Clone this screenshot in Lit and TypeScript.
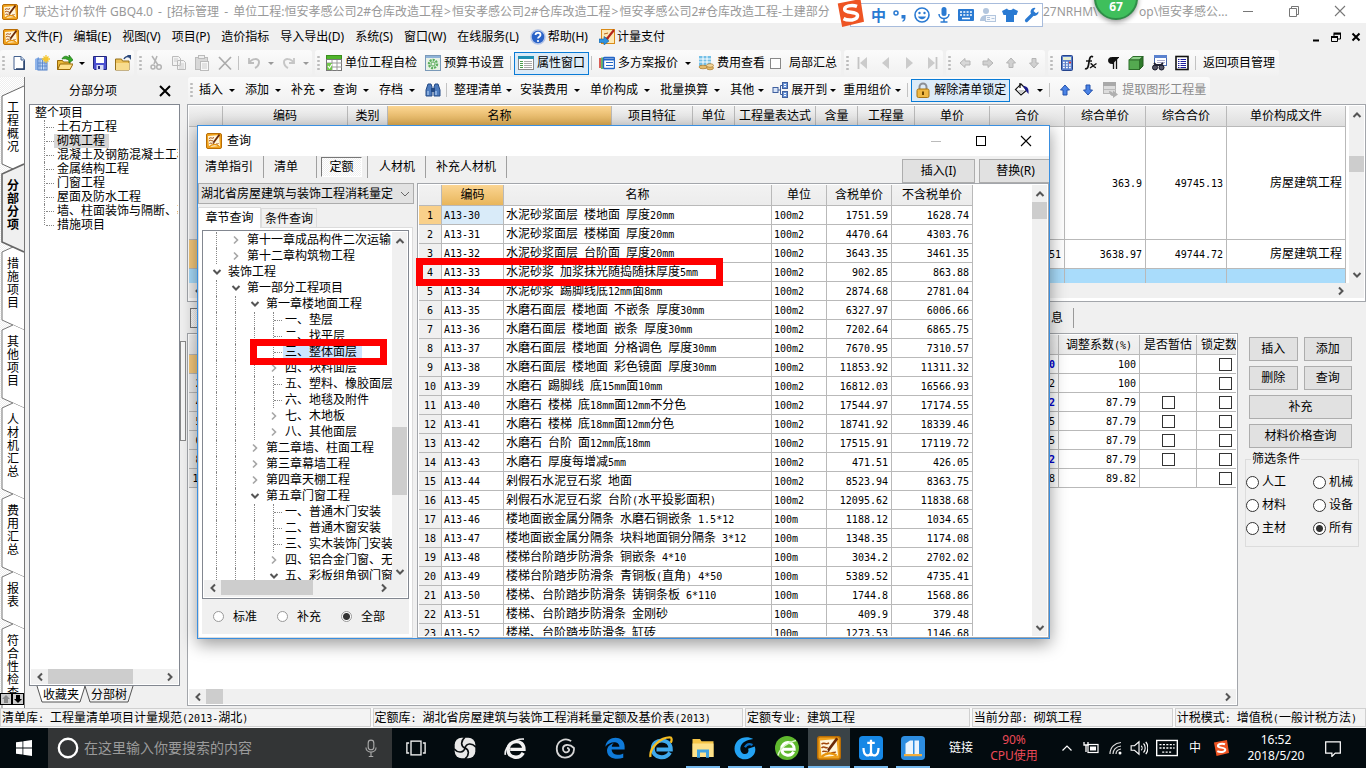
import { LitElement, html, svg, css, nothing } from "lit";
import { customElement } from "lit/decorators.js";
import { classMap } from "lit/directives/class-map.js";
import { styleMap } from "lit/directives/style-map.js";

/* ---------- icons ---------- */

const icons: Record<string, unknown> = {
  app: svg`<rect x=".5" y=".5" width="15" height="15" rx="1.500" fill="#f0a21c" stroke="#b96d05"/><path d="M2 3l11-1 1 11-11 1z" fill="#fff6dc"/><path d="M3 5.500c2-2 3 1 5-1M3 8c2-2 3 1 4-.5M3.500 10.500c1.500-1 2 .5 3-.5M9.500 11.500c1-1 2 0 3-1" stroke="#a2470b" fill="none"/><path d="M7.500 9.500L13.500 1.500" stroke="#6b2a08" stroke-width="1.900"/><path d="M6.500 11.500l1-2.500 1 1z" fill="#6b2a08"/><path d="M3 14c3-3 7-3 10-1" stroke="#e8940c" stroke-width="1.500" fill="none"/>`,
  file: svg`<path d="M3 1.500h7l3.500 3.500v9.500H3z" fill="#fff" stroke="#44618f"/><path d="M10 1.500v3.500h3.500" fill="#cfe0f5" stroke="#44618f"/><path d="M13 6v8H5" stroke="#29426b" stroke-width="1.500" fill="none"/>`,
  project: svg`<path d="M1 4l4-2v13H1z" fill="#8fb4ea"/><rect x="4" y="4" width="9" height="11" fill="#c3daf7" stroke="#4f7fc7"/><path d="M6 5v10M8.500 5v10M11 5v10M4 8h9M4 11h9" stroke="#4f7fc7" stroke-width=".8"/><path d="M12 0v8M8 4h8M9.500 1.500l5 5M14.500 1.500l-5 5" stroke="#f6c62b" stroke-width="1.300"/>`,
  open: svg`<path d="M.5 5.500h5l1 1.500H13v7.500H.5z" fill="#e9b83a" stroke="#9a6a09"/><path d="M3 9h13l-3 5.500H.8z" fill="#ffe08a" stroke="#9a6a09"/><path d="M5 4c1-3 5-4 7-1V0l4 5-4 3V5.500C10 3.500 7 3.500 5 4z" fill="#35a828" stroke="#1b7212" stroke-width=".7"/>`,
  save: svg`<path d="M1.500 1.500h13v13h-12l-1-1z" fill="#4a4fd0" stroke="#22267e"/><rect x="4" y="2" width="8" height="6" fill="#fff"/><rect x="4.500" y="10" width="7" height="5" fill="#d8dcf4"/><rect x="6" y="11" width="2" height="3" fill="#22267e"/>`,
  folder: svg`<path d="M.5 4h6l1 2H14v9H.5z" fill="#edc25b" stroke="#96701a"/><path d="M1 8h13v7H1z" fill="#f8dc8e"/><path d="M9 4c1-2 3-3 5-2" stroke="#2d4a7c" stroke-width="1.500" fill="none"/><path d="M12 0h4v5z" fill="#2d4a7c"/>`,
  cut: svg`<path d="M4 1l6 9M9 1L6 9" stroke="#b3b3b3" stroke-width="1.500" fill="none"/><circle cx="5" cy="12" r="2" fill="none" stroke="#b3b3b3" stroke-width="1.500"/><circle cx="11" cy="12" r="2.300" fill="none" stroke="#b3b3b3" stroke-width="1.500"/>`,
  copy: svg`<path d="M1.500 1.500h6l2 2v7h-8zM6.500 5.500h6l2 2v7h-8z" fill="#f3f3f3" stroke="#bbb"/><path d="M8 9h5M8 11h5M8 13h5M3 4h4M3 6h3" stroke="#ccc"/>`,
  paste: svg`<rect x="1.500" y="2.500" width="12" height="12" fill="#d8d8d8" stroke="#bbb"/><rect x="4.500" y=".5" width="6" height="3" fill="#eee" stroke="#bbb"/><rect x="6.500" y="6.500" width="8" height="9" fill="#f8f8f8" stroke="#bbb"/><path d="M8 9h5M8 11h5M8 13h5" stroke="#ccc"/>`,
  del: svg`<path d="M2 2l12 12.500M14 2L2 14.500" stroke="#ababab" stroke-width="1.700"/>`,
  undo: svg`<path d="M3 3v5h5" fill="none" stroke="#bdbdbd" stroke-width="1.800"/><path d="M3 8c3-5 10-5 10-1 0 3-2 5-4 6" fill="none" stroke="#bdbdbd" stroke-width="2"/>`,
  redo: svg`<path d="M13 3v5H8" fill="none" stroke="#c6c6c6" stroke-width="1.800"/><path d="M13 8C10 3 3 3 3 7c0 3 2 5 4 6" fill="none" stroke="#c6c6c6" stroke-width="2"/>`,
  check: svg`<rect x=".5" y=".5" width="15" height="4" fill="#4fb52b" stroke="#3b8e1e"/><rect x=".5" y="4.500" width="15" height="11" fill="#fff" stroke="#777"/><path d="M1 8h15M1 12h15M6 5v11M11 5v11" stroke="#999"/><rect x="1" y="8" width="5" height="7" fill="#72c84c"/><path d="M2 11l1.500 2L6 9" stroke="#fff" stroke-width="1.200" fill="none"/>`,
  gear: svg`<rect x=".5" y=".5" width="15" height="15" fill="#e8f1e6" stroke="#7a99b8"/><rect x="1" y="1" width="14" height="2" fill="#8fb3d9"/><circle cx="8" cy="9" r="4" fill="none" stroke="#5cae5c" stroke-width="2.400" stroke-dasharray="2 1"/><circle cx="8" cy="9" r="2" fill="none" stroke="#5cae5c"/>`,
  props: svg`<rect x=".5" y="1.500" width="15" height="13" fill="#fff" stroke="#888"/><rect x="0" y="1" width="16" height="3" fill="#1f8fb4"/><path d="M2 6.500h3M2 8.500h3M2 10.500h3M2 12.500h3" stroke="#4a9e4a"/><path d="M6 6.500h8M6 8.500h8M6 10.500h8M6 12.500h8" stroke="#aaa"/>`,
  plans: svg`<path d="M1 3v10" stroke="#d02b20" stroke-width="1.500"/><path d="M3 2.500v11.500" stroke="#3aa13a" stroke-width="1.500"/><rect x="4.500" y="2.500" width="11" height="11" rx="1" fill="#fff" stroke="#2466c6" stroke-width="1.400"/><path d="M5 4.500h10" stroke="#2466c6" stroke-width="2"/><path d="M7 7.500h7M7 10.500h7" stroke="#2466c6"/>`,
  cost: svg`<rect x="1" y="1" width="12" height="10" fill="#73bfe6"/><path d="M1 4h12M1 7h12M5 1v10M9 1v10" stroke="#fff"/><ellipse cx="5" cy="12" rx="4" ry="1.800" fill="#e5ba6a" stroke="#a9772b" stroke-width=".7"/><ellipse cx="12" cy="13" rx="3.500" ry="1.800" fill="#e5ba6a" stroke="#a9772b" stroke-width=".7"/><ellipse cx="12" cy="10.500" rx="3.500" ry="1.800" fill="#f3d79b" stroke="#a9772b" stroke-width=".7"/>`,
  first: svg`<path d="M3.500 2v12" stroke="#c4c4c4" stroke-width="1.800"/><path d="M12 2v12L5 8z" fill="#cbcbcb"/>`,
  prev: svg`<path d="M11 2v12L4 8z" fill="#cbcbcb"/>`,
  next: svg`<path d="M5 2v12l7-6z" fill="#cbcbcb"/>`,
  last: svg`<path d="M12.500 2v12" stroke="#c4c4c4" stroke-width="1.800"/><path d="M4 2v12l7-6z" fill="#cbcbcb"/>`,
  gl: svg`<path d="M3 8l5-4.500V6h5v4H8v2.500z" fill="#d8d8d8" stroke="#b5b5b5"/>`,
  gr: svg`<path d="M13 8L8 3.500V6H3v4h5v2.500z" fill="#d0d0d0" stroke="#b5b5b5"/>`,
  gu: svg`<path d="M8 3l4.500 5H10v4.500H6V8H3.500z" fill="#d0d0d0" stroke="#b5b5b5"/>`,
  gd: svg`<path d="M8 13l4.500-5H10V3.500H6V8H3.500z" fill="#d0d0d0" stroke="#b5b5b5"/>`,
  calc: svg`<rect x="2.500" y=".5" width="11" height="15" rx="1" fill="#5b7fcb" stroke="#24438c"/><rect x="4" y="2" width="8" height="3" fill="#e4ecd0"/><path d="M4 7.500h8M4 10h8M4 12.500h8" stroke="#fff" stroke-width="1.500" stroke-dasharray="1.800 1.200"/><path d="M10 7.500h2" stroke="#d33" stroke-width="1.500"/>`,
  fx: svg`<path d="M11 2C8 0 7.500 4 7 7s-1 8-4 6.500" fill="none" stroke="#111" stroke-width="1.700"/><path d="M4 6h6" stroke="#111" stroke-width="1.400"/><path d="M8.500 8.500c2 0 3 4.500 5.500 4M14.500 8.500L8 13" stroke="#111" stroke-width="1.400" fill="none"/>`,
  para: svg`<path d="M14 2.500H6.500a3 3 0 000 6H8" fill="#111" stroke="#111"/><path d="M8.500 2v12M11.500 2v12" stroke="#111" stroke-width="1.300"/>`,
  cube: svg`<path d="M1 5l4-3.500h10L11.500 5z" fill="#8fd08a" stroke="#2d6e2a"/><path d="M11.500 5L15 1.500v9.500l-3.500 3.500z" fill="#2f7a2b" stroke="#245c21"/><rect x="1" y="5" width="10.500" height="9.500" fill="#54a950" stroke="#2d6e2a"/>`,
  findwin: svg`<rect x="3.500" y=".5" width="12" height="10" fill="#fff" stroke="#4a6aae"/><rect x="3" y="0" width="13" height="3" fill="#5a82cf"/><path d="M6 5.500h8M6 7.500h8" stroke="#aac"/><circle cx="4" cy="12.500" r="2.500" fill="#556" stroke="#112"/><circle cx="10.500" cy="12.500" r="2.500" fill="#556" stroke="#112"/><path d="M3 8l2 2h5l2-2" stroke="#223" stroke-width="1.800" fill="none"/>`,
  list: svg`<rect x="2" y="1.500" width="12" height="13" fill="#fff" stroke="#111" stroke-width="1.600"/><path d="M6.500 4.500H12M6.500 6.500H12M6.500 8.500H12M6.500 10.500H12M6.500 12.500H12" stroke="#1b1b9a"/><path d="M4 4.500h1.500M4 6.500h1.500M4 8.500h1.500M4 10.500h1.500M4 12.500h1.500" stroke="#1b1b9a"/>`,
  binoc: svg`<path d="M3 2h3l1 3v9H1V8zM10 2h3l2 6v6H9V5z" fill="#4d7bbd" stroke="#244a85"/><path d="M6 6h4v4H6z" fill="#244a85"/><path d="M3 9v4M11 9v4" stroke="#a9c8f0" stroke-width="1.300"/>`,
  expand: svg`<rect x="1" y="5.500" width="5" height="5" fill="#d6e3f7" stroke="#3f5f9e"/><rect x="10.500" y=".5" width="5" height="6" fill="#6b94d6" stroke="#3f5f9e"/><rect x="10.500" y="9.500" width="5" height="6" fill="#6b94d6" stroke="#3f5f9e"/><path d="M6 8h2.500M10 3.500H8.500v9H10" stroke="#3f5f9e" fill="none"/><path d="M12 2.500h2M12 4.500h2M12 11.500h2M12 13.500h2" stroke="#fff"/>`,
  lock: svg`<path d="M4.500 8V5a3.500 3.500 0 017 0v3" fill="none" stroke="#8b8f96" stroke-width="2"/><rect x="2" y="7" width="12" height="8.500" rx="1.500" fill="#f0b944" stroke="#a87410"/><rect x="7" y="9.500" width="2" height="3.500" fill="#6b4600"/>`,
  bucket: svg`<path d="M7 2l6 6-6 5-5.500-5.500z" fill="#fff" stroke="#111" stroke-width="1.200"/><path d="M6 1v5" stroke="#111" stroke-width="1.300"/><path d="M9 4c4 0 6 2 5.500 8L12 9z" fill="#1b1b8a"/><path d="M4 8h7l-4 4z" fill="#ccc"/>`,
  up: svg`<path d="M8 3l4.500 5H10v5H6V8H3.500z" fill="#4a83e6" stroke="#2452ad"/>`,
  down: svg`<path d="M8 13l4.500-5H10V3H6v5H3.500z" fill="#4a83e6" stroke="#2452ad"/>`,
  extract: svg`<rect x=".5" y=".5" width="12" height="11" fill="#ddd" stroke="#b5b5b5"/><rect x="0" y="0" width="13" height="4" fill="#a9a9a9"/><path d="M1 7.500h12" stroke="#bbb"/><path d="M6 9c2 0 3 1 4 2V8.500l5 4-5 3.500v-2c-2 0-4-2-4-5z" fill="#b0b0b0"/>`,
  help: svg`<circle cx="8" cy="8" r="7" fill="#2a63c8" stroke="#b4c4e6" stroke-width="1.500"/><path d="M5.500 6c.3-3 5-3 5 0 0 1.700-2.500 1.700-2.500 3.500" stroke="#fff" stroke-width="1.800" fill="none"/><circle cx="8" cy="12" r="1.100" fill="#fff"/>`,
  pay: svg`<rect x="2.500" y=".5" width="13" height="14" fill="#fde9b5" stroke="#d98a17"/><path d="M5 5l4-1M5 8l5 2" stroke="#b8641a"/><path d="M7 11L15 1" stroke="#b3261b" stroke-width="2.200"/><path d="M0 10h5V7.500L10 12l-5 4v-2.500H0z" fill="#2e93e0" stroke="#14609f" stroke-width=".6"/>`,
  punct: svg`<circle cx="4" cy="6" r="2" fill="none" stroke="#2a7ad2" stroke-width="1.500"/><path d="M9.500 8h4v3c0 2-1 3-3 4v-1.500c1-.5 1.300-1 1.300-2H9.500z" fill="#2a7ad2"/>`,
  smile: svg`<circle cx="8" cy="8" r="7" fill="none" stroke="#2a7ad2" stroke-width="1.600"/><circle cx="5.500" cy="6" r="1.200" fill="#2a7ad2"/><circle cx="10.500" cy="6" r="1.200" fill="#2a7ad2"/><path d="M4 9.500c1.500 3.500 6.500 3.500 8 0z" fill="#2a7ad2"/>`,
  mic: svg`<rect x="5.500" y="0" width="5" height="9" rx="2.500" fill="#2a7ad2"/><path d="M3 7c0 6 10 6 10 0M8 12v3M4.500 15h7" fill="none" stroke="#2a7ad2" stroke-width="1.500"/>`,
  kbd: svg`<rect x="0" y="2" width="16" height="12" rx="1" fill="#2a7ad2"/><path d="M2 5h12M2 8h12" stroke="#fff" stroke-width="1.600" stroke-dasharray="2 1.300"/><path d="M4 11.500h8" stroke="#fff" stroke-width="1.600"/>`,
  person: svg`<circle cx="6" cy="4" r="3" fill="#b3c6de"/><path d="M0 14c0-8 12-8 12 0z" fill="#b3c6de"/><rect x="5.500" y="8.500" width="10" height="6" fill="#f5f8fc" stroke="#b3c6de"/><path d="M7 10.500h3M7 12.500h3M11.500 11.500h3" stroke="#b3c6de"/>`,
  shirt: svg`<path d="M5 1.500c1 2 5 2 6 0l5 2.500-1.500 4H12v7H4V8H1.500L0 4z" fill="#2a7ad2"/>`,
  wrench: svg`<path d="M2.500 13.500L9 7" stroke="#2a7ad2" stroke-width="3.200" stroke-linecap="round"/><path d="M14.500 4.500a4 4 0 11-3-3.500L9.500 4l2.500 2.200z" fill="#2a7ad2"/>`,
  sogou: svg`<path d="M1 2.500L14 0l2 13-12.500 3z" fill="#ee5423"/><path d="M12 4.200C9 3 4.500 4 5 6.200c.4 2 7.500.8 7.300 3.500-.2 2.500-5.300 3-8 1.500" fill="none" stroke="#fff" stroke-width="2"/>`,
  min: svg`<path d="M3 8.500h10" stroke="#777"/>`,
  restore: svg`<path d="M3.500 5.500h7v8h-7zM5.500 5.500v-2h7v8h-2" fill="none" stroke="#777"/>`,
  close: svg`<path d="M3 3l10 10M13 3L3 13" stroke="#777" stroke-width="1.100"/>`,
  mmin: svg`<path d="M5 11.500h6" stroke="#000" stroke-width="2"/>`,
  mrestore: svg`<path d="M3.500 8.500h6v4h-6zM6 8V5h6.500v5H10" fill="none" stroke="#000"/><path d="M3 8h7M5.500 4.500h7.500" stroke="#000" stroke-width="1.800"/>`,
  mclose: svg`<path d="M4.500 4.500l7 7M11.500 4.500l-7 7" stroke="#000" stroke-width="2"/>`,
  px: svg`<path d="M3 3l10 10M13 3L3 13" stroke="#000" stroke-width="2"/>`,
  dmin: svg`<path d="M3 8.500h10" stroke="#bbb"/>`,
  dmax: svg`<rect x="3.500" y="3.500" width="9" height="9" fill="none" stroke="#000"/>`,
  dclose: svg`<path d="M3 3l10 10M13 3L3 13" stroke="#000" stroke-width="1.100"/>`,
  win: svg`<path d="M0 2.300L6.500 1.400V7.600H0zM7.300 1.300L16 0v7.600H7.300zM0 8.400h6.500v6.200L0 13.700zM7.300 8.400H16V16l-8.700-1.300z" fill="#fff"/>`,
  ring: svg`<circle cx="8" cy="8" r="6.700" fill="none" stroke="#fff" stroke-width="1.700"/>`,
  tmic: svg`<rect x="5.500" y="1" width="5" height="8.500" rx="2.500" fill="none" stroke="#aaa"/><path d="M3.500 7.500c0 5.500 9 5.500 9 0M8 12v3M6 15.500h4" fill="none" stroke="#aaa"/>`,
  task: svg`<rect x="4" y="2.500" width="8" height="11" fill="none" stroke="#eee" stroke-width="1.100"/><path d="M2.500 4H.7v8h1.800M13.500 4h1.800v8h-1.800" fill="none" stroke="#eee" stroke-width="1.100"/>`,
  fan: svg`<rect x=".5" y=".5" width="15" height="15" rx="5" fill="#e9e9e9"/><path d="M8 8C5 7 4.500 3 8 0M8 8c1-3.500 5-4 8-.5M8 8c3 1 3.500 5 0 8M8 8c-1 3.500-5 4-8 .5" stroke="#0a0f12" fill="none" stroke-width="1.200"/>`,
  ewhite: svg`<path d="M14 11.500c-3 5-11 4-11-2.500 0-7 11.500-8 11.500 0H4.500" fill="none" stroke="#f2f2f2" stroke-width="2.500"/><path d="M1 13C0 8 7 1 14.500 1.500" fill="none" stroke="#f2f2f2" stroke-width="1.200"/>`,
  gwhite: svg`<path d="M12.500 3C8 0 2 3 2 8.500 2 13 5 15 8 15c4 0 7-3 6.500-7C11 4.500 6.500 5.500 6.500 8.500 6.500 11 9 12 10.500 10.500 11.500 9.500 11 8 9.500 8" fill="none" stroke="#d6d6d6" stroke-width="1.300"/>`,
  edge: svg`<path d="M1 7C2-1.500 15-1.500 15 7v2H5.500c.5 4.500 6 4.500 8.500 3v3C9 17 2 15.500 2.200 9.500 2.500 6.500 5 5 7 4.500c-1 1-1.300 1.500-1.300 2.500h5.500C11 2.500 4 3 1 7z" fill="#0f7ad8"/>`,
  ie: svg`<path d="M14 11c-3 5-11.500 4-11.500-2.500 0-7 12-8 12 .5H5" fill="none" stroke="#3fa9ec" stroke-width="2.700"/><path d="M1 14C0 8 8 .5 14.500 1c1 1 .5 2.500 0 3.500" fill="none" stroke="#f5bd22" stroke-width="1.500"/>`,
  explorer: svg`<path d="M1 2h5l1 1.500h8V14H1z" fill="#f6c648"/><path d="M1 5h14v9H1z" fill="#fde28a"/><path d="M4 9h8v5.500h-2V11H6v3.500H4z" fill="#3fa3e0"/>`,
  gblue: svg`<path d="M13.500 2C8-1 1 2 1 8.500 1 13 5 16 8.500 15.500 13 15 16 11 14.500 7L10 8.500c1 2-.5 3.500-2 3.500-2 0-3.500-2-3-4.500C5.500 4.500 9 2.500 13.500 2z" fill="#23a2f2"/><path d="M8 7.500c1-2 3-2.500 5-1.500" stroke="#0b6fc4" stroke-width="1.500" fill="none"/>`,
  egreen: svg`<circle cx="8" cy="8" r="8" fill="#5fb82e"/><path d="M12.500 10.500c-2 3.500-8 3-8-2 0-5.500 8.300-5.500 8.300.3H5" fill="none" stroke="#fff" stroke-width="2"/><path d="M2 13c1-5 7-9 12-10" stroke="#d9f2c5" fill="none"/>`,
  bluebox: svg`<rect width="16" height="16" rx="2.500" fill="#1688e6"/><path d="M8 2.500v11M5.500 4.500h5M3 8c0 6 4 6 5 3 1 3 5 3 5-3" fill="none" stroke="#fff" stroke-width="1.500"/>`,
  docbox: svg`<rect width="16" height="16" rx="2.500" fill="#2d8de0"/><path d="M3 12V5l3-2h2v9zM9 12V3h3v9z" fill="#eaf4fd"/><path d="M2 12h12v1.500H2z" fill="#f3ae3d"/>`,
  tup: svg`<path d="M3.500 10.500L8 6l4.500 4.500" fill="none" stroke="#fff" stroke-width="1.200"/>`,
  batt: svg`<rect x="5" y="4.500" width="10" height="8" fill="none" stroke="#fff" stroke-width="1.200"/><path d="M1 2v3h4V2M3 5v7" stroke="#fff" fill="none" stroke-width="1.300"/><rect x="7" y="6.500" width="6" height="4" fill="#fff"/>`,
  wifi: svg`<path d="M3 14C3 7 8 3 14 2.500M6 14c0-4 3-7.500 8-8M9 14c0-2.500 2-4.500 5-5" fill="none" stroke="#ddd" stroke-width="1.200"/><circle cx="13" cy="13" r="1.500" fill="#fff"/>`,
  spk: svg`<path d="M1 6h3l4-3.500v11L4 10H1z" fill="none" stroke="#fff"/><path d="M10 6c1 1 1 3 0 4M12 4c2 2 2 6 0 8M14 2.500c2.500 3 2.500 8 0 11" fill="none" stroke="#fff"/>`,
  tkbd: svg`<rect x=".5" y="2.500" width="15" height="11" fill="none" stroke="#fff"/><path d="M2.500 5.500h11M2.500 8h11M4.500 11h7" stroke="#fff" stroke-dasharray="1.500 1"/>`,
  note: svg`<path d="M1.500 2.500h13v10H10L7 15.500v-3H1.500z" fill="none" stroke="#fff" stroke-width="1.100"/>`,
  cu: svg`<path d="M4.500 10L8 6.500 11.500 10" fill="none" stroke="#555" stroke-width="2"/>`,
  cd: svg`<path d="M4.500 6L8 9.500 11.500 6" fill="none" stroke="#555" stroke-width="2"/>`,
  cl: svg`<path d="M10 4.500L6.500 8l3.500 3.500" fill="none" stroke="#555" stroke-width="2"/>`,
  cr: svg`<path d="M6 4.500L9.500 8 6 11.500" fill="none" stroke="#555" stroke-width="2"/>`,
  crg: svg`<path d="M6 4.500L9.500 8 6 11.500" fill="none" stroke="#a6a6a6" stroke-width="1.600"/>`,
};

const icon = (name: string, size = "s16") =>
  html`<svg class=${"ic " + size} viewBox="0 0 16 16" aria-hidden="true">${icons[name]}</svg>`;

/* Latin runs sit on the half-width cell of the CJK grid. */
const tx = (s: string) =>
  s.split(/([\x20-\x7e]+)/).filter(Boolean).map((p) =>
    /^[\x20-\x7e]/.test(p) ? html`<span class="m">${p}</span>` : p);

const track = (before: number, thumb: number, after: number) => html`
  <div class="track"><i style=${styleMap({ flexGrow: String(before) })}></i><b style=${styleMap({ flexGrow: String(thumb) })}></b><i style=${styleMap({ flexGrow: String(after) })}></i></div>`;
const hbar = (before: number, thumb: number, after: number) => html`
  <div class="hbar"><span class="arr">${icon("cl")}</span>${track(before, thumb, after)}<span class="arr">${icon("cr")}</span></div>`;
const vbar = (before: number, thumb: number, after: number) => html`
  <div class="vbar"><span class="arr">${icon("cu")}</span>${track(before, thumb, after)}<span class="arr">${icon("cd")}</span></div>`;

/* ---------- data ---------- */

const sideTabs = ["工程概况", "分部分项", "措施项目", "其他项目", "人材机汇总", "费用汇总", "报表", "符合性检查"];
const sections = ["土石方工程", "砌筑工程", "混凝土及钢筋混凝土工程", "金属结构工程", "门窗工程", "屋面及防水工程", "墙、柱面装饰与隔断、幕墙工程", "措施项目"];

type Node = [level: number, kind: "open" | "shut" | "leaf", label: string];
const chapters: Node[] = [
  [1, "shut", "第十一章成品构件二次运输"], [1, "shut", "第十二章构筑物工程"], [0, "open", "装饰工程"],
  [1, "open", "第一部分工程项目"], [2, "open", "第一章楼地面工程"], [3, "leaf", "一、垫层"],
  [3, "leaf", "二、找平层"], [3, "leaf", "三、整体面层"], [3, "shut", "四、块料面层"],
  [3, "leaf", "五、塑料、橡胶面层"], [3, "leaf", "六、地毯及附件"], [3, "shut", "七、木地板"],
  [3, "shut", "八、其他面层"], [2, "shut", "第二章墙、柱面工程"], [2, "shut", "第三章幕墙工程"],
  [2, "shut", "第四章天棚工程"], [2, "open", "第五章门窗工程"], [3, "leaf", "一、普通木门安装"],
  [3, "leaf", "二、普通木窗安装"], [3, "leaf", "三、实木装饰门安装"], [3, "shut", "四、铝合金门窗、无框门"],
  [3, "open", "五、彩板组角钢门窗"],
];

const quotas: [string, string, string, string][] = [
  ["水泥砂浆面层 楼地面 厚度20mm", "100m2", "1751.59", "1628.74"],
  ["水泥砂浆面层 楼梯面 厚度20mm", "100m2", "4470.64", "4303.76"],
  ["水泥砂浆面层 台阶面 厚度20mm", "100m2", "3643.35", "3461.35"],
  ["水泥砂浆 加浆抹光随捣随抹厚度5mm", "100m2", "902.85", "863.88"],
  ["水泥砂浆 踢脚线底12mm面8mm", "100m2", "2874.68", "2781.04"],
  ["水磨石面层 楼地面 不嵌条 厚度30mm", "100m2", "6327.97", "6006.66"],
  ["水磨石面层 楼地面 嵌条 厚度30mm", "100m2", "7202.64", "6865.75"],
  ["水磨石面层 楼地面 分格调色 厚度30mm", "100m2", "7670.95", "7310.57"],
  ["水磨石面层 楼地面 彩色镜面 厚度30mm", "100m2", "11853.92", "11311.32"],
  ["水磨石 踢脚线 底15mm面10mm", "100m2", "16812.03", "16566.93"],
  ["水磨石 楼梯 底18mm面12mm不分色", "100m2", "17544.97", "17174.55"],
  ["水磨石 楼梯 底18mm面12mm分色", "100m2", "18741.92", "18339.46"],
  ["水磨石 台阶 面12mm底18mm", "100m2", "17515.91", "17119.72"],
  ["水磨石 厚度每增减5mm", "100m2", "471.51", "426.05"],
  ["剁假石水泥豆石浆 地面", "100m2", "8523.94", "8363.75"],
  ["剁假石水泥豆石浆 台阶(水平投影面积)", "100m2", "12095.62", "11838.68"],
  ["楼地面嵌金属分隔条 水磨石铜嵌条 1.5*12", "100m", "1188.12", "1034.65"],
  ["楼地面嵌金属分隔条 块料地面铜分隔条 3*12", "100m", "1348.35", "1174.08"],
  ["楼梯台阶踏步防滑条 铜嵌条 4*10", "100m", "3034.2", "2702.02"],
  ["楼梯台阶踏步防滑条 青铜板(直角) 4*50", "100m", "5389.52", "4735.41"],
  ["楼梯、台阶踏步防滑条 铸铜条板 6*110", "100m", "1744.8", "1568.86"],
  ["楼梯、台阶踏步防滑条 金刚砂", "100m", "409.9", "379.48"],
  ["楼梯、台阶踏步防滑条 缸砖", "100m", "1273.53", "1146.68"],
];

const billCols = ["", "编码", "类别", "名称", "项目特征", "单位", "工程量表达式", "含量", "工程量", "单价", "合价", "综合单价", "综合合价", "单价构成文件"];
const billRows = [
  ["", "", "", "", "", "", "", "", "", "", "", "363.9", "49745.13", "房屋建筑工程"],
  ["", "", "", "", "", "", "", "", "", "", "51", "3638.97", "49744.72", "房屋建筑工程"],
  ["", "", "", "", "", "", "", "", "", "", "", "", "", ""],
];

/* number, last digit of the price, emphasised, factor, can be provisional */
const materials: [string, string, boolean, string, boolean][] = [
  ["", "0", true, "100", false], ["2", "2", false, "100", false], ["4", "2", true, "87.79", true],
  ["5", "5", false, "87.79", true], ["6", "5", false, "87.79", true], ["8", "2", true, "87.79", true],
  ["10", "8", false, "89.82", false],
];

@customElement("app-root")
export class AppRoot extends LitElement {
  static styles = css`
    :host { display: flex; flex-direction: column; position: relative; height: 100vh; overflow: hidden; background: #f0f0f0; color: #000;
      font: 12px/16px "Noto Sans", "Noto Sans CJK SC", sans-serif; }
    * { box-sizing: border-box; }
    button, select, input { font: inherit; color: inherit; margin: 0; padding: 0; border: 0; background: none; border-radius: 0; white-space: nowrap; }
    a { color: inherit; text-decoration: none; }
    .m { font: 10px/12px "DejaVu Sans Mono", monospace; white-space: pre; }
    .ic { display: block; flex: none; }
    .s14 { width: 14px; height: 14px; } .s16 { width: 16px; height: 16px; } .s18 { width: 18px; height: 18px; }
    .s20 { width: 20px; height: 20px; } .s22 { width: 22px; height: 22px; } .s24 { width: 24px; height: 24px; } .s28 { width: 28px; height: 28px; }

    .title { display: flex; align-items: center; height: 23px; background: #fff; color: #999; padding-left: 2px; white-space: nowrap; flex: none; position: relative; }
    .title .name { flex: 1; margin-left: 5px; overflow: hidden; }
    .title .name i { font-style: normal; margin: 0 2px; }
    .title .name b { font-weight: 400; margin: 0 1px; }
    .title .path { width: 185px; display: flex; }
    .title .path span { width: 96px; }
    .wins { display: flex; gap: 30px; padding: 0 18px 2px 12px; }
    .wins button, .dwins button { display: block; }
    .ime { position: absolute; right: 323px; top: 3px; width: 193px; height: 24px; display: flex; align-items: center; gap: 6px; padding-left: 20px;
      border: 1px solid #a8bcdc; background: #fff; color: #2a7ad2; font-weight: 700; font-size: 15px; z-index: 3; }
    .ime .logo { position: absolute; left: -15px; top: -5px; }
    .ball { position: absolute; right: 228px; top: -24px; width: 44px; height: 44px; border-radius: 50%; background: #3fbf5c; border: 2px solid #2f8d48;
      color: #fff; font-weight: 700; text-align: center; line-height: 14px; padding-top: 22px; z-index: 3; box-shadow: 0 2px 5px #0006; }

    .menu { display: flex; align-items: center; height: 27px; padding-left: 3px; gap: 11px; flex: none; }
    .menu > .ic { margin-right: -5px; }
    .menu a { display: flex; gap: 2px; align-items: center; white-space: nowrap; }
    .menu .mwins { margin-left: auto; display: flex; gap: 4px; padding-right: 2px; }

    .bar { display: flex; gap: 3px; height: 27px; flex: none; }
    .grp { display: flex; align-items: center; background: linear-gradient(#fbfbfb, #f1f1f1); border-radius: 3px; height: 26px; white-space: nowrap; }
    .grip { width: 7px; height: 16px; background: radial-gradient(circle, #bbb 1px, transparent 1.500px) 0 0 / 7px 4px; flex: none; }
    .slot { width: 23px; display: flex; justify-content: center; align-items: center; flex: none; }
    .tb { display: flex; align-items: center; height: 23px; padding: 0 4px; }
    .tb.i { padding-left: 0; }
    .tb.n { padding-right: 0; }
    .tb.on { border: 1px solid #0a7bd6; background: #dcebf8; padding-right: 3px; }
    .tb.on .slot { margin-left: -1px; }
    .tb.dis { color: #8b8b8b; }
    .sep { width: 1px; height: 14px; background: #c2c2c2; margin: 0 3px 0 2px; flex: none; }
    .ar { width: 12px; display: flex; justify-content: center; flex: none; }
    .ar::after { content: ""; border: 3px solid transparent; border-top-color: #000; border-bottom: 0; }
    .ar.g::after { border-top-color: #999; }
    .ar.n14 { width: 14px; } .ar.w18 { width: 18px; }
    .ckl { display: flex; align-items: center; gap: 8px; padding: 0 4px 0 1px; }

    input[type="checkbox"] { appearance: none; width: 13px; height: 13px; border: 1px solid #333; background: #fff; display: block; }
    .ckl input[type="checkbox"] { width: 11px; height: 11px; border-color: #888; }
    input[type="radio"] { appearance: none; width: 13px; height: 13px; border: 1px solid #333; border-radius: 50%; background: #fff; flex: none; }
    input[type="radio"]:checked { background: radial-gradient(circle, #333 3px, #fff 4px); }

    .main { display: flex; flex: 1; min-height: 0; font-family: "Liberation Sans", "Noto Sans CJK SC", sans-serif; }
    .hatch { background: repeating-conic-gradient(#fff 0 25%, #eee 0 50%) 0 0 / 2px 2px; }
    .side { width: 25px; flex: none; border-right: 1px solid #777; padding-top: 13px; overflow: hidden; position: relative; display: flex; flex-direction: column; }
    .stab { position: relative; display: block; flex: none; width: 24px; padding: 12px 5px 14px 7px; line-height: 13px; white-space: normal; text-align: center; word-break: break-all; }
    .stab span { position: relative; display: block; }
    .stab svg { position: absolute; left: 0; top: 0; width: 100%; height: 100%; overflow: visible; }
    .stab.sel { font-weight: 700; z-index: 1; }
    .spin { position: absolute; left: 0; bottom: 3px; display: flex; z-index: 2; }
    .spin button { width: 12px; height: 12px; background: #ccc; border: 1px solid #000; display: flex; align-items: center; justify-content: center; }
    .spin svg { width: 8px; height: 8px; }

    .panel { width: 151px; margin-left: 4px; flex: none; display: flex; flex-direction: column; padding-bottom: 2px; }
    .phead { height: 27px; display: flex; align-items: center; justify-content: flex-end; gap: 40px; padding-right: 7px; }
    .box { border: 1px solid #828790; background: #fff; }
    .ptree { flex: 1; min-height: 0; display: flex; flex-direction: column; padding: 1px; }
    .ptree ul { list-style: none; margin: 0; padding: 0 0 0 4px; flex: 1; overflow: hidden; line-height: 14px; white-space: nowrap; }
    .ptree .kids { padding-left: 9px; }
    .ptree .kids li { display: flex; align-items: center; }
    .ptree .kids li::before { content: ""; width: 9px; height: 14px; border-left: 1px dotted #888; flex: none; }
    .ptree .kids li:last-child::before { height: 7px; margin-bottom: 7px; }
    .ptree .kids li i { width: 8px; border-top: 1px dotted #888; margin-left: -8px; flex: none; }
    .ptree .kids span { padding: 0 4px 0 3px; line-height: 14px; flex: none; }
    .ptree .kids .cur { background: #d6d6d6; }
    .btabs { height: 20px; padding-left: 8px; display: flex; }
    .btabs button { position: relative; height: 17px; width: 48px; display: flex; justify-content: center; align-items: center; }
    .btabs svg { position: absolute; inset: 0; width: 100%; height: 100%; overflow: visible; }
    .btabs span { position: relative; }
    .split { width: 7px; flex: none; display: flex; align-items: flex-start; padding-top: 264px; }
    .split i { width: 6px; height: 100px; border: 1px solid #888; background: #f7f7f7; }

    .work { flex: 1; min-width: 0; display: flex; flex-direction: column; padding-bottom: 2px; }
    .work .bar { padding-left: 1px; font-family: "Noto Sans", "Noto Sans CJK SC", sans-serif; }
    .grid { border: 1px solid #a3a6ab; background: #fff; padding: 1px; display: flex; }
    .view { flex: 1; min-width: 0; overflow: hidden; }
    table { border-collapse: separate; border-spacing: 0; table-layout: fixed; width: 100%; }
    th, td { border: 0 solid #b9b9b9; border-width: 0 1px 1px 0; padding: 0 2px; overflow: hidden; white-space: nowrap; font-weight: 400; }
    th { background: linear-gradient(#f2f2f2, #ececec); height: 20px; padding: 0; line-height: 18px; text-align: center; }
    th.hot { background: linear-gradient(#fbd592, #e8b65c); }
    .r { text-align: right; padding-right: 3px; }
    .bills { height: 198px; flex: none; flex-direction: column; }
    .bills .pane { flex: 1; min-height: 0; display: flex; }
    .bills .view { padding-right: 3px; }
    .bills .foot { padding-right: 15px; background: #f0f0f0; margin-bottom: 2px; }
    .bills th { height: 21px; background: linear-gradient(#f2f2f2, #dedede); }
    .bills th.hot { background: linear-gradient(#fbd592, #dba94f); }
    .bills tr:nth-child(1) td { height: 113px; }
    .bills tr:nth-child(2) td { height: 29px; }
    .bills tr:nth-child(3) td { height: 19px; background: #a9dcfb; }
    .bills td:first-child { background: #ececec; }
    .bills tr:nth-child(2) td:first-child { background: #f5c97d; }
    .w20 { width: 20px; } .w23 { width: 23px; } .w34 { width: 34px; } .w40 { width: 40px; } .w42 { width: 42px; } .w57 { width: 57px; } .w62 { width: 62px; }
    .w55 { width: 55px; } .w65 { width: 65px; } .w75 { width: 75px; } .w81 { width: 81px; } .w119 { width: 119px; } .w125 { width: 125px; }
    .hbar { display: flex; height: 15px; background: #f0f0f0; flex: none; }
    .vbar { display: flex; flex-direction: column; width: 15px; background: #f0f0f0; flex: none; }
    .arr { width: 17px; height: 17px; display: flex; align-items: center; justify-content: center; flex: none; margin: -1px 0; }
    .vbar .arr { margin: 0 -1px; }
    .track { flex: 1; display: flex; min-width: 0; min-height: 0; }
    .vbar .track { flex-direction: column; }
    .track i, .track b { flex: 0 1 0; }
    .track b { background: #cdcdcd; }

    .dtabs { height: 31px; flex: none; display: flex; align-items: center; justify-content: space-between; padding: 0 292px 0 3px; }
    .dtabs button:first-child { width: 40px; height: 20px; border: 1px solid #777; }
    .dtabs button:last-child { border-right: 1px solid #999; padding-right: 10px; height: 20px; }
    .low { flex: 1; min-height: 0; display: flex; }
    .mats { flex: 1; min-width: 0; flex-direction: column; }
    .mats table { width: calc(100% + 18px); }
    .mats td { height: 19px; line-height: 16px; }
    .mats td:first-child { background: #ececec; text-align: center; }
    .mats tbody tr:first-child td:first-child { background: #f5c97d; }
    .mats input { margin: 1px auto 0; }
    .blue { color: #0000d0; } .blue .m { font-weight: 700; }
    .tools { width: 128px; flex: none; padding: 4px 7px 0 7px; }
    .btns { display: grid; grid-template-columns: 1fr 1fr; gap: 5px 6px; margin: 0 7px 0 4px; }
    .push { height: 24px; border: 1px solid #adadad; background: #e1e1e1; }
    .btns .wide { grid-column: span 2; }
    fieldset { margin: 3px 0 0; border: 1px solid #dcdcdc; padding: 7px 0 10px 0; min-width: 0; display: grid; grid-template-columns: 67px 1fr; row-gap: 7px; }
    legend { padding: 0 1px; margin-left: 5px; }
    .rl { display: flex; align-items: center; gap: 3px; white-space: nowrap; }

    .status { height: 20px; flex: none; display: flex; gap: 2px; background: #fafafa; font-family: "Liberation Sans", "Noto Sans CJK SC", sans-serif; white-space: nowrap; }
    .status div { border: 1px solid #d0d0d0; background: #f3f3f3; padding: 1px 1px; overflow: hidden; line-height: 16px; height: 19px; flex-basis: 0; min-width: 0; }
    .q372 { flex-grow: 372; } .q224 { flex-grow: 224; } .q200 { flex-grow: 200; } .q190 { flex-grow: 190; }

    .taskbar { height: 40px; flex: none; background: #030b0f; display: flex; align-items: stretch; color: #fff; white-space: nowrap; }
    .taskbar button { display: flex; align-items: center; justify-content: center; flex: none; position: relative; }
    .start { width: 48px; }
    .search { width: 344px; background: #333536; display: flex; align-items: center; padding: 0 12px 0 9px; gap: 5px; }
    .search input { flex: 1; min-width: 0; outline: 0; font-size: 14px; }
    .search input::placeholder { color: #9b9b9b; opacity: 1; }
    .t48 { width: 48px; } .t50 { width: 50px; } .t42 { width: 42px; }
    .run::after { content: ""; position: absolute; left: 4px; right: 4px; bottom: 0; height: 2px; background: #76b9ed; }
    .act { background: #3a4347; }
    .act::after { left: 0; right: 0; }
    .tray { margin-left: auto; display: flex; align-items: center; padding-right: 17px; }
    .tray > * { display: flex; justify-content: center; flex: none; }
    .cpu { width: 82px; flex-direction: column; align-items: center; color: #ec4a58; text-align: center; }
    .clk { width: 82px; flex-direction: column; align-items: center; }
    .y24 { width: 24px; } .y28 { width: 28px; } .y32 { width: 32px; }

    .dlg { position: absolute; left: 197px; top: 125px; width: 853px; height: 514px; border: 1px solid #3a8fe0; background: #f0f0f0; z-index: 2;
      box-shadow: 0 5px 16px #0006; display: flex; flex-direction: column; overflow: hidden; font-family: "Liberation Sans", "Noto Sans CJK SC", sans-serif; }
    .dtitle { height: 30px; background: #fff; display: flex; align-items: center; gap: 5px; padding-left: 8px; flex: none; }
    .dwins { margin-left: auto; display: flex; gap: 29px; padding-right: 15px; }
    .qtabs { height: 27px; flex: none; display: flex; align-items: flex-start; }
    .qtabs .t { height: 22px; padding: 0 10px 0 11px; border-left: 1px solid #a0a0a0; text-align: left; }
    .qtabs .t:first-child { padding-left: 7px; border: 0; }
    .qtabs .t.two { min-width: 54px; padding-left: 10px; border-right: 1px solid #a0a0a0; }
    .qtabs .t.end { padding-left: 10px; border-right: 1px solid #a0a0a0; }
    .qtabs .press { width: 41px; height: 20px; margin: 1px 5px 0 4px; border: 1px solid #777; border-color: #777 #fff #fff #777; }
    .qtabs .push { width: 73px; margin: 3px -3px 0 4px; font-family: "Noto Sans", "Noto Sans CJK SC", sans-serif; }
    .qtabs .push.a { margin: 3px 0 0 auto; }
    .dbody { flex: 1; min-height: 0; display: flex; gap: 3px; }
    .left { width: 216px; flex: none; display: flex; flex-direction: column; }
    .combo { position: relative; display: flex; }
    .combo select { appearance: none; flex: 1; min-width: 0; height: 21px; border: 1px solid #acacac; background: #e2e2e2; padding: 0 20px 0 2px; overflow: hidden; }
    .combo svg { position: absolute; right: 1px; top: 3px; width: 16px; height: 16px; }
    .ltabs { display: flex; align-items: flex-end; padding-top: 2px; height: 23px; }
    .ltabs button { width: 56px; height: 19px; border: 1px solid #dcdcdc; border-bottom: 0; padding-top: 1px; }
    .ltabs .on { width: 63px; height: 21px; background: #fff; margin-bottom: -1px; position: relative; padding-top: 0; }
    .page { flex: 1; min-height: 0; margin-right: 1px; border: 1px solid #dcdcdc; background: #fff; padding: 2px 3px 3px; display: flex; flex-direction: column; }
    .tree { height: 369px; display: flex; flex-direction: column; padding: 1px; flex: none; }
    .tree .row { flex: 1; min-height: 0; display: flex; }
    .tree ul { flex: 1; min-width: 0; overflow: hidden; margin: 0; padding: 0 0 0 3px; list-style: none; }
    .tree li { display: flex; align-items: center; height: 16px; white-space: nowrap; }
    .tree li span { padding: 0 5px 0 2px; line-height: 16px; }
    .tree .cur { background: #cce4ff; }
    .tree .foot { padding: 0 15px 2px 0; background: #f0f0f0; }
    .c { width: 19px; height: 16px; flex: none; display: flex; align-items: center; }
    .c svg { margin: 0 auto; }
    .c.v::before, .c.e::before { content: ""; margin-left: 9px; height: 16px; border-left: 1px dotted #888; }
    .c.e::after { content: ""; width: 8px; border-top: 1px dotted #888; }
    .radios { flex: 1; background: #f0f0f0; display: flex; align-items: center; justify-content: space-between; padding: 0 24px 0 11px; }
    .radios .rl { gap: 9px; }
    .radios input[type="radio"] { width: 11px; height: 11px; border-color: #999; }
    .quota { flex: 1; min-width: 0; overflow: hidden; }
    .quota .view { padding-right: 59px; }
    .quota th { height: 21px; }
    .quota td { height: 19px; line-height: 16px; }
    .quota td:first-child { background: #f0f0f0; text-align: center; padding: 0; }
    .quota tbody tr:first-child td:first-child { background: #f9d08a; }
    .quota tbody tr:first-child td:nth-child(2) { background: #d9ebf9; }
    .mark { position: absolute; border: 7px solid #f00; z-index: 4; pointer-events: none; }
    .m1 { left: 250px; top: 339px; width: 137px; height: 26px; }
    .m2 { left: 416px; top: 258px; width: 307px; height: 28px; }
  `;

  private tool(name: string) {
    return html`<button class="slot" aria-label=${name}>${icon(name)}</button>`;
  }

  private drop(label: string, wide = false) {
    return html`<button class="tb n">${label}<i class=${wide ? "ar w18" : "ar n14"}></i></button>`;
  }

  private title() {
    return html`<header class="title">${icon("app")}
      <span class="name">广联达计价软件 GBQ4.0 <i>-</i> [招标管理 <i>-</i> 单位工程:恒安孝感公司2#仓库改造工程<b>&gt;</b>恒安孝感公司2#仓库改造工程<b>&gt;</b>恒安孝感公司2#仓库改造工程-土建部分</span>
      <span class="path"><span>27NRHM\\</span>op\\恒安孝感公...</span>
      <div class="wins">${["min", "restore", "close"].map((n) => html`<button aria-label=${n}>${icon(n)}</button>`)}</div>
      <div class="ime"><span class="logo">${icon("sogou", "s28")}</span><span>中</span>
        ${["punct", "smile", "mic", "kbd", "person", "shirt", "wrench"].map((n) => icon(n))}</div>
      <div class="ball">67</div>
    </header>`;
  }

  private menu() {
    const a = ["文件(F)", "编辑(E)", "视图(V)", "项目(P)", "造价指标", "导入导出(D)", "系统(S)", "窗口(W)", "在线服务(L)"];
    return html`<nav class="menu">${icon("app")}${a.map((m) => html`<a href="#">${m}</a>`)}
      <a href="#">${icon("help")}帮助(H)</a><a href="#">${icon("pay")}计量支付</a>
      <span class="mwins">${["mmin", "mrestore", "mclose"].map((n) => html`<button aria-label=${n}>${icon(n)}</button>`)}</span></nav>`;
  }

  private toolbar() {
    const g = html`<i class="grip"></i>`;
    const s = html`<i class="sep"></i>`;
    return html`<div class="bar">
      <div class="grp">${g}${["file", "project", "open"].map(this.tool)}<i class="ar"></i>${["save", "folder"].map(this.tool)}</div>
      <div class="grp">${g}${["cut", "copy", "paste", "del"].map(this.tool)}${s}${this.tool("undo")}<i class="ar g"></i>${this.tool("redo")}<i class="ar g"></i></div>
      <div class="grp">${g}
        <button class="tb i"><span class="slot">${icon("check")}</span>单位工程自检</button>
        <button class="tb i"><span class="slot">${icon("gear")}</span>预算书设置</button>${s}
        <button class="tb i on"><span class="slot">${icon("props")}</span>属性窗口</button>${s}
        <button class="tb i"><span class="slot">${icon("plans")}</span>多方案报价</button><i class="ar"></i>
        <button class="tb i"><span class="slot">${icon("cost")}</span>费用查看</button>
        <label class="ckl"><input type="checkbox" />局部汇总</label></div>
      <div class="grp">${g}${["first", "prev", "next", "last"].map(this.tool)}</div>
      <div class="grp">${g}${["gl", "gr", "gu", "gd"].map(this.tool)}</div>
      <div class="grp">${g}${["calc", "fx", "para", "cube", "findwin", "list"].map(this.tool)}${s}<button class="tb">返回项目管理</button></div>
    </div>`;
  }

  private side() {
    return html`<nav class="side hatch">${sideTabs.map((t, i) => {
      const n = t.length * 13 + 26;
      const on = i === 1;
      return html`<button class=${classMap({ stab: true, sel: on })}>
        <svg viewBox="0 0 24 ${n}" preserveAspectRatio="none" aria-hidden="true">
          ${on || i === 0
            ? svg`<path d="M24 -4L2 6V${n - 4}L24 ${n + 6}z" fill=${on ? "#f0f0f0" : "#fff"}/><path d="M24 -4L2 6V${n - 4}L24 ${n + 6}" fill="none" stroke="#666" stroke-width=${on ? 1.6 : 1}/>`
            : svg`<path d="M13 1L2 6V${n - 4}L24 ${n + 6}V6z" fill="#fff"/><path d="M13 1L2 6V${n - 4}L24 ${n + 6}" fill="none" stroke="#777"/>`}
        </svg><span>${t}</span></button>`;
    })}
      <div class="spin"><button aria-label="up"><svg viewBox="0 0 8 8"><path d="M4 0l4 4H6v4H2V4H0z" fill="#888"/></svg></button><button aria-label="down"><svg viewBox="0 0 8 8"><path d="M4 8l4-4H6V0H2v4H0z"/></svg></button></div>
    </nav>`;
  }

  private panel() {
    return html`<aside class="panel">
      <div class="phead"><span>分部分项</span><button aria-label="close">${icon("px")}</button></div>
      <div class="ptree box"><ul><li>整个项目</li><li><ul class="kids">${sections.map((s, i) =>
        html`<li><i></i><span class=${i === 1 ? "cur" : ""}>${s}</span></li>`)}</ul></li></ul>
        ${hbar(0, 84, 28)}</div>
      <div class="btabs">${["收藏夹", "分部树"].map((t, i) => html`<button>
        <svg viewBox="0 0 48 17" preserveAspectRatio="none" aria-hidden="true"><path d="M0 0L5 16H43L48 0" fill=${i ? "#f0f0f0" : "#fff"} stroke="#555"/></svg><span>${t}</span></button>`)}</div>
    </aside>`;
  }

  private workspace() {
    const w = ["w34", "w125", "w40", "", "w81", "w42", "w81", "w42", "w57", "w75", "w75", "w81", "w81", "w119"];
    const s = html`<i class="sep"></i>`;
    return html`<section class="work">
      <div class="bar"><div class="grp"><i class="grip"></i>
        ${this.drop("插入", true)}${this.drop("添加", true)}${this.drop("补充")}${this.drop("查询", true)}${this.drop("存档", true)}
        ${this.tool("binoc")}${s}${this.drop("整理清单")}${this.drop("安装费用", true)}${this.drop("单价构成", true)}${this.drop("批量换算", true)}${this.drop("其他")}
        <button class="tb i n"><span class="slot">${icon("expand")}</span>展开到<i class="ar"></i></button>${this.drop("重用组价")}${s}
        <button class="tb i on"><span class="slot">${icon("lock")}</span>解除清单锁定</button>
        ${this.tool("bucket")}<i class="ar n14"></i>${s}${this.tool("up")}${this.tool("down")}
        <button class="tb i dis"><span class="slot">${icon("extract")}</span>提取图形工程量</button></div></div>
      <div class="grid bills"><div class="pane"><div class="view"><table>
        <colgroup>${w.map((c) => html`<col class=${c} />`)}</colgroup>
        <thead><tr>${billCols.map((c) => html`<th class=${c === "名称" ? "hot" : ""}>${c}</th>`)}</tr></thead>
        <tbody>${billRows.map((r) => html`<tr>${r.map((c) => html`<td class="r">${tx(c)}</td>`)}</tr>`)}</tbody></table></div>
        ${vbar(33, 17, 95)}</div>
        <div class="foot">${hbar(0, 30, 100)}</div></div>
      <div class="dtabs"><button class="hatch"></button><button>息</button></div>
      <div class="low">
        <div class="grid mats"><div class="view"><table>
          <colgroup><col class="w20" /><col /><col class="w81" /><col class="w81" /><col class="w57" /><col class="w57" /></colgroup>
          <thead><tr><th></th><th></th><th></th><th>${tx("调整系数(%)")}</th><th>是否暂估</th><th>锁定数量</th></tr></thead>
          <tbody>${materials.map(([n, v, b, f, p]) => html`<tr><td>${tx(n)}</td><td></td><td class=${b ? "r blue" : "r"}>${tx(v)}</td>
            <td class="r">${tx(f)}</td><td>${p ? html`<input type="checkbox" aria-label="是否暂估" />` : nothing}</td>
            <td><input type="checkbox" aria-label="锁定数量" /></td></tr>`)}</tbody></table></div>
          ${hbar(0, 17, 998)}</div>
        <div class="tools"><div class="btns">
          ${["插入", "添加", "删除", "查询"].map((t) => html`<button class="push">${t}</button>`)}
          <button class="push wide">补充</button><button class="push wide">材料价格查询</button></div>
          <fieldset><legend>筛选条件</legend>${["人工", "机械", "材料", "设备", "主材", "所有"].map((t) =>
            html`<label class="rl"><input type="radio" name="filter" ?checked=${t === "所有"} />${t}</label>`)}</fieldset></div>
      </div></section>`;
  }

  private dialog() {
    return html`<section class="dlg" role="dialog" aria-label="查询">
      <div class="dtitle">${icon("app")}<span>查询</span><div class="dwins">${["dmin", "dmax", "dclose"].map((n) => html`<button aria-label=${n}>${icon(n)}</button>`)}</div></div>
      <div class="qtabs"><button class="t">清单指引</button><button class="t two">清单</button><button class="press hatch">定额</button>
        <button class="t">人材机</button><button class="t end">补充人材机</button>
        <button class="push a">插入(I)</button><button class="push">替换(R)</button></div>
      <div class="dbody">
        <div class="left">
          <div class="combo"><select aria-label="定额库"><option>湖北省房屋建筑与装饰工程消耗量定额及基价表</option></select>
            <svg viewBox="0 0 16 16"><path d="M4 6l4 4 4-4" fill="none" stroke="#666"/></svg></div>
          <div class="ltabs"><button class="on">章节查询</button><button>条件查询</button></div>
          <div class="page"><div class="tree box"><div class="row"><ul>${chapters.map(([lv, kind, label]) => html`<li>
              ${Array.from({ length: lv }, () => html`<i class="c v"></i>`)}
              ${kind === "leaf" ? html`<i class="c e"></i>` : html`<i class="c">${icon(kind === "open" ? "cd" : "crg")}</i>`}
              <span class=${label === "三、整体面层" ? "cur" : ""}>${label}</span></li>`)}</ul>
            ${vbar(177, 68, 68)}</div><div class="foot">${hbar(0, 92, 62)}</div></div>
            <div class="radios">${["标准", "补充", "全部"].map((t) => html`<label class="rl"><input type="radio" name="scope" ?checked=${t === "全部"} />${t}</label>`)}</div>
          </div></div>
        <div class="grid quota"><div class="view"><table>
          <colgroup><col class="w23" /><col class="w62" /><col /><col class="w55" /><col class="w65" /><col class="w81" /></colgroup>
          <thead><tr><th></th><th class="hot">编码</th><th>名称</th><th>单位</th><th>含税单价</th><th>不含税单价</th></tr></thead>
          <tbody>${quotas.map(([n, u, a, b], i) => html`<tr><td>${tx(String(i + 1))}</td><td>${tx("A13-" + (30 + i))}</td><td>${tx(n)}</td><td>${tx(u)}</td>
            <td class="r">${tx(a)}</td><td class="r">${tx(b)}</td></tr>`)}</tbody></table></div>
          ${vbar(0, 17, 400)}</div>
      </div></section>
      <div class="mark m1"></div><div class="mark m2"></div>`;
  }

  private taskbar() {
    return html`<footer class="taskbar">
      <button class="start" aria-label="开始">${icon("win")}</button>
      <div class="search">${icon("ring", "s22")}<input aria-label="搜索" placeholder="在这里输入你要搜索的内容" />${icon("tmic", "s18")}</div>
      <button class="t48" aria-label="task">${icon("task", "s20")}</button>
      ${["fan", "ewhite", "gwhite", "edge"].map((n) => html`<button class="t50" aria-label=${n}>${icon(n, "s22")}</button>`)}
      <button class="t42" aria-label="ie">${icon("ie", "s24")}</button>
      ${["explorer", "gblue", "egreen", "app", "bluebox", "docbox"].map((n) => html`<button class=${classMap({ t42: true, run: true, act: n === "app" })} aria-label=${n}>${icon(n, "s24")}</button>`)}
      <div class="tray"><span>链接</span><div class="cpu"><span>90%</span><span>CPU使用</span></div>
        <span class="y24">${icon("tup")}</span><span class="y24">${icon("batt")}</span><span class="y24">${icon("wifi")}</span><span class="y24">${icon("spk", "s18")}</span>
        <span class="y32">${icon("tkbd", "s22")}</span><span class="y24">中</span><span class="y28">${icon("sogou")}</span>
        <div class="clk"><span>16:52</span><span>2018/5/20</span></div><span class="y32">${icon("note", "s18")}</span></div>
    </footer>`;
  }

  render() {
    return html`${this.title()}${this.menu()}${this.toolbar()}
      <div class="main">${this.side()}${this.panel()}<div class="split"><i></i></div>${this.workspace()}</div>
      <div class="status"><div class="q372">${tx("清单库: 工程量清单项目计量规范(2013-湖北)")}</div><div class="q372">${tx("定额库: 湖北省房屋建筑与装饰工程消耗量定额及基价表(2013)")}</div>
        <div class="q224">${tx("定额专业: 建筑工程")}</div><div class="q200">${tx("当前分部: 砌筑工程")}</div><div class="q190">${tx("计税模式: 增值税(一般计税方法)")}</div></div>
      ${this.taskbar()}${this.dialog()}`;
  }
}
